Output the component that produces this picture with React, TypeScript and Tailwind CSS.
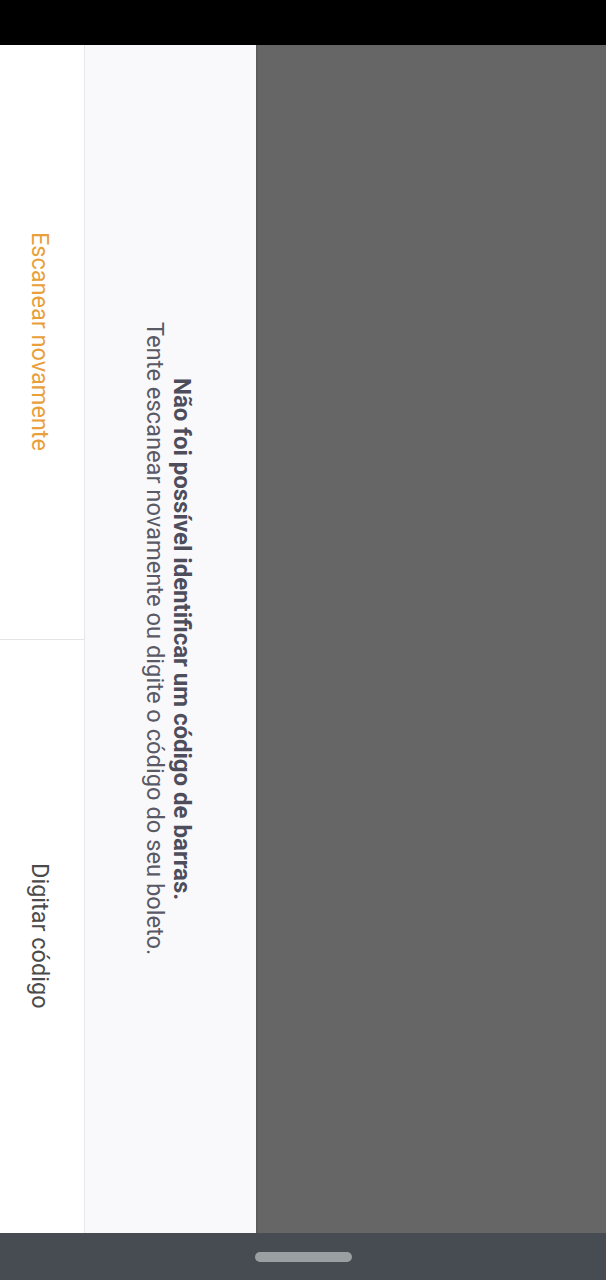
export default function App() {
  return (
    <div className="w-[606px] h-[1280px] flex flex-col font-['Roboto',sans-serif]">
      {/* status bar */}
      <div className="h-[45px] bg-black" />

      <div className="flex-1 flex">
        {/* actions */}
        <div className="w-[85px] bg-white border-r border-[#e6e6eb] flex flex-col">
          <button className="flex-1 flex items-center justify-center pr-[5px] border-b border-[#e4e4e4]">
            <span className="[writing-mode:vertical-rl] text-[23.5px] text-[#e9a03a] leading-none">
              Escanear novamente
            </span>
          </button>
          <button className="flex-1 flex items-center justify-center pr-[5px]">
            <span className="[writing-mode:vertical-rl] text-[23.5px] text-[#4a4a4a] leading-none">
              Digitar código
            </span>
          </button>
        </div>

        {/* message */}
        <div className="w-[171px] bg-[#f9f9fb] flex items-center justify-center pr-[6px]">
          <div className="[writing-mode:vertical-rl] text-center leading-[27px]">
            <p className="text-[24px] font-bold text-[#4d4d5c]">
              Não foi possível identificar um código de barras.
            </p>
            <p className="text-[23.7px] text-[#5a5a66]">
              Tente escanear novamente ou digite o código do seu boleto.
            </p>
          </div>
        </div>

        {/* camera */}
        <div className="flex-1 bg-[#666666] border-l-2 border-[#5c5c5c]" />
      </div>

      {/* navigation bar */}
      <div className="h-[47px] bg-[#474c53] flex items-center justify-center">
        <div className="w-[97px] h-[10px] rounded-full bg-[#9aa0a2]" />
      </div>
    </div>
  )
}
